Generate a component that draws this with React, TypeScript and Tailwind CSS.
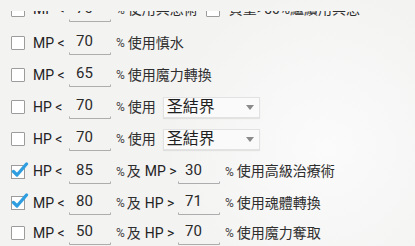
import React from 'react';

const font = { fontFamily: 'Roboto, "Noto Sans CJK TC", "Noto Sans", sans-serif' };

function Box({ checked = false }: { checked?: boolean }) {
  if (!checked) {
    return <div className="w-[14px] h-[14px] shrink-0 border border-[#9c9c9c] bg-white rounded-[1px]" />;
  }
  return (
    <svg width="18" height="17" viewBox="0 0 18 17" className="shrink-0 -mr-[4px] -mt-[3px]">
      <rect x="0.5" y="3.5" width="13" height="13" fill="#fff" stroke="#9c9c9c" />
      <path d="M2.5 9.5 L6 13 L15.5 2" fill="none" stroke="#2f9ee0" strokeWidth="3.2" strokeLinecap="round" strokeLinejoin="round" />
    </svg>
  );
}

function Field({ value }: { value: string }) {
  return (
    <div className="w-[42px] shrink-0 flex flex-col">
      <div className="h-[21px] pl-[7px] text-[15px] leading-[20px] text-[#2a2a2a]">{value}</div>
      <svg width="42" height="3" viewBox="0 0 42 3" className="block">
        <path d="M0.5 0.5 V2.5 H41.5 V0.5" fill="none" stroke="#adadad" strokeWidth="1" />
      </svg>
    </div>
  );
}

function Select({ label }: { label: string }) {
  return (
    <div className="ml-[7px] w-[97px] h-[21px] flex items-center justify-between bg-[#fafafa] border border-[#e2e2e2] shadow-[0_1px_1px_rgba(0,0,0,0.08)] pl-[3px] pr-[5px]">
      <span className="text-[16px] leading-[20px] text-[#1f1f1f]">{label}</span>
      <svg width="8" height="5" viewBox="0 0 8 5"><path d="M0 0 H8 L4 5 Z" fill="#8a8a8a" /></svg>
    </div>
  );
}

function Lead({ checked, label, value }: { checked?: boolean; label: string; value: string }) {
  return (
    <>
      <Box checked={checked} />
      <span className="ml-[8px] w-[36px] shrink-0 text-[14px] text-[#222] whitespace-nowrap">{label}</span>
      <Field value={value} />
    </>
  );
}

function Pct({ text }: { text: string }) {
  return (
    <span className="ml-[5px] flex items-center text-[14px] text-[#2e2e2e] whitespace-nowrap">
      <span className="text-[12px] text-[#444]">%</span>
      <span className="ml-[3px]">{text}</span>
    </span>
  );
}

function And({ label }: { label: string }) {
  return (
    <span className="ml-[5px] w-[62px] shrink-0 flex items-center text-[14px] text-[#2e2e2e] whitespace-nowrap">
      <span className="text-[12px] text-[#444]">%</span>
      <span className="ml-[2px]">及</span>
      <span className="ml-[4px] text-[#222]">{label}</span>
    </span>
  );
}

export default function App() {
  return (
    <div className="w-[415px] h-[246px] flex flex-col overflow-hidden bg-[#f3f3f2] bg-[radial-gradient(circle_at_78%_60%,#fbfbfb_0,#f3f3f2_45%)]" style={font}>
      {/* top edge of the scroll area */}
      <div className="h-[11px] shrink-0" />
      <div className="flex-1 overflow-hidden">
        <div className="-mt-[19px] flex flex-col">
          <div className="flex items-center h-[35px] pl-[11px]">
            <Lead label="MP <" value="70" />
            <Pct text="使用冥想術" />
            <div className="ml-[8px]"><Box /></div>
            <span className="ml-[9px] text-[14px] text-[#2e2e2e] whitespace-nowrap">負重&gt;50%繼續用冥想</span>
          </div>
          <div className="flex items-center h-[32px] pl-[11px]">
            <Lead label="MP <" value="70" />
            <Pct text="使用慎水" />
          </div>
          <div className="flex items-center h-[32px] pl-[11px]">
            <Lead label="MP <" value="65" />
            <Pct text="使用魔力轉換" />
          </div>
          <div className="flex items-center h-[32px] pl-[11px]">
            <Lead label="HP <" value="70" />
            <Pct text="使用" />
            <Select label="圣結界" />
          </div>
          <div className="flex items-center h-[32px] pl-[11px]">
            <Lead label="HP <" value="70" />
            <Pct text="使用" />
            <Select label="圣結界" />
          </div>
          <div className="flex items-center h-[33px] pl-[11px]">
            <Lead checked label="HP <" value="85" />
            <And label="MP >" />
            <Field value="30" />
            <Pct text="使用高級治療術" />
          </div>
          <div className="flex items-center h-[30px] pl-[11px]">
            <Lead checked label="MP <" value="80" />
            <And label="HP >" />
            <Field value="71" />
            <Pct text="使用魂體轉換" />
          </div>
          <div className="flex items-center h-[30px] pl-[11px]">
            <Lead label="MP <" value="50" />
            <And label="HP >" />
            <Field value="70" />
            <Pct text="使用魔力奪取" />
          </div>
        </div>
      </div>
    </div>
  );
}
